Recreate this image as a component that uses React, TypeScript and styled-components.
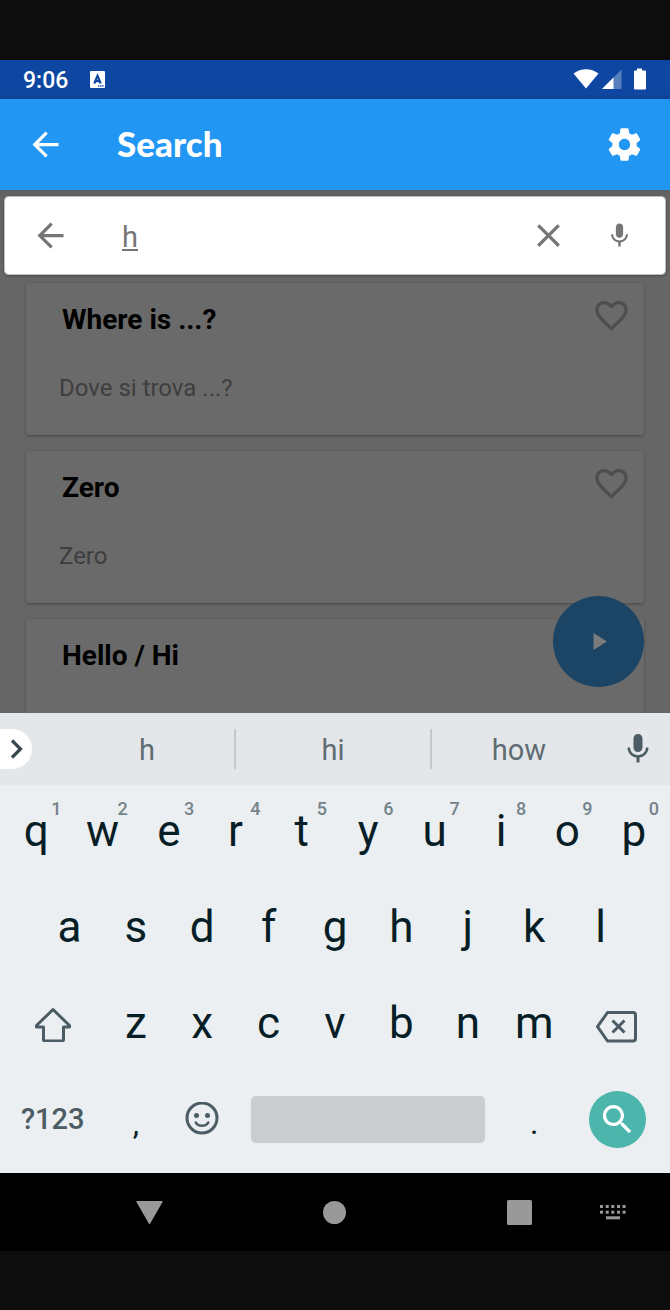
import React, { useState } from "react";
import styled, { createGlobalStyle } from "styled-components";

const GlobalStyle = createGlobalStyle`
  *, *::before, *::after { box-sizing: border-box; }
  html, body { margin: 0; padding: 0; background: #0d0d0d; }
  body { font-family: Roboto, "Liberation Sans", sans-serif; }
  button, input { font: inherit; color: inherit; }
`;

const Device = styled.div`
  display: flex;
  flex-direction: column;
  height: 100vh;
  min-height: 900px;
  padding: 60px 0 59px;
  background: #0d0d0d;
`;

const StatusBar = styled.div`
  flex: none;
  display: flex;
  align-items: center;
  height: 39px;
  padding: 0 24px 0 23px;
  background: linear-gradient(#0d47a1 34px, #0c3f8f 39px);
  color: #fff;
`;

const Clock = styled.span`
  flex: none;
  width: 67px;
  padding-top: 2px;
  font-size: 23px;
  font-weight: 500;
  line-height: 40px;
`;

const StatusIcons = styled.div`
  display: flex;
  align-items: center;
  margin-left: auto;
`;

const AppBar = styled.header`
  flex: none;
  display: flex;
  align-items: center;
  gap: 52px;
  height: 91px;
  padding: 0 26px;
  background: #2196f3;
  color: #fff;
`;

const Heading = styled.h1`
  flex: 1;
  margin: 0;
  padding-bottom: 3px;
  font-family: Lato, "Liberation Sans", sans-serif;
  font-size: 35px;
  font-weight: 900;
  line-height: 40px;
`;

const IconButton = styled.button`
  flex: none;
  display: flex;
  align-items: center;
  justify-content: center;
  width: 39px;
  height: 39px;
  padding: 0;
  border: 0;
  background: none;
`;

const Content = styled.main`
  position: relative;
  flex: 1;
  min-height: 0;
  overflow: hidden;
  padding-top: 6px;
  background: linear-gradient(#5e5e5e, #666 8px);
`;

const SearchBar = styled.form`
  display: flex;
  align-items: center;
  height: 79px;
  margin: 0 4px 8px;
  padding: 0 26px;
  border: 1px solid #bdbdbd;
  border-radius: 4px;
  background: #fff;
  background-clip: padding-box;
  box-shadow: 0 1px 3px rgba(0, 0, 0, 0.3);
  color: #757575;
`;

const SearchField = styled.input`
  flex: 1;
  min-width: 0;
  margin: 0 32px 0 52px;
  padding: 2px 0 0;
  border: 0;
  outline: 0;
  background: none;
  color: #757575;
  font-size: 29px;
  line-height: 40px;
  text-decoration: underline;
  text-decoration-thickness: 2px;
  text-underline-offset: 2px;
`;

const MicButton = styled(IconButton)`
  margin-left: 32px;
`;

const PhraseList = styled.ul`
  display: flex;
  flex-direction: column;
  gap: 16px;
  margin: 0;
  padding: 0 26px;
  list-style: none;
`;

const PhraseCard = styled.li`
  display: flex;
  flex: none;
  justify-content: space-between;
  align-items: flex-start;
  height: 152px;
  padding: 13px 13px 0 33px;
  border-radius: 3px;
  background: #6a6a6a;
  box-shadow: 0 1px 3px rgba(0, 0, 0, 0.3);
`;

const PhraseTitle = styled.h2`
  margin: 8px 0 37px 3px;
  color: #000;
  font-size: 28px;
  font-weight: 700;
  line-height: 32px;
`;

const PhraseText = styled.p`
  margin: 0;
  color: #3e3e3e;
  font-size: 24px;
  line-height: 30px;
`;

const HeartButton = styled(IconButton)`
  color: #4f4d4d;
`;

const PlayButton = styled.button`
  position: absolute;
  right: 26px;
  bottom: 26px;
  display: flex;
  align-items: center;
  justify-content: center;
  width: 91px;
  height: 91px;
  padding: 0;
  border: 0;
  border-radius: 50%;
  background: #1c4464;
  color: #7b7b7b;
`;

const Keyboard = styled.section`
  flex: none;
  background: #ebeff2;
`;

const Suggestions = styled.div`
  display: grid;
  grid-template-columns: 60px 174fr 198fr 174fr 64px;
  align-items: center;
  height: 72px;
  background: #e3e7ea;
  color: #4b5c64;
`;

const ExpandButton = styled.button`
  display: flex;
  align-items: center;
  justify-content: flex-end;
  width: 32px;
  height: 40px;
  padding: 0 8px 0 0;
  border: 0;
  border-radius: 0 20px 20px 0;
  background: #fff;
  color: #37474f;
`;

const Suggestion = styled.button<{ $divided?: boolean }>`
  height: 40px;
  padding: 2px 0 0;
  border: 0 solid #c3c8cb;
  border-width: 0 ${(p) => (p.$divided ? "2px" : "0")};
  background: none;
  color: #5f6c72;
  font-size: 29px;
  line-height: 38px;
`;

const VoiceButton = styled(IconButton)`
  justify-self: center;
`;

const Keys = styled.div`
  padding: 0 3px 4px;
`;

/* Twenty half-key columns, so that keys may be 1, 1.5 or 4 keys wide. */
const KeyRow = styled.div`
  display: grid;
  grid-template-columns: repeat(20, minmax(0, 1fr));
  height: 96px;
`;

const Key = styled.button<{ $span?: number; $start?: number }>`
  position: relative;
  display: flex;
  align-items: center;
  justify-content: center;
  grid-column: ${(p) => (p.$start ? p.$start : "auto")} / span ${(p) => p.$span ?? 2};
  padding: 0 0 4px;
  border: 0;
  background: none;
  color: #071e26;
  font-size: 44px;
  line-height: 52px;
`;

const PunctuationKey = styled(Key)`
  padding: 4px 0 0;
  font-size: 32px;
`;

const FunctionKey = styled(Key)`
  color: #4b5c64;
  font-size: 29px;
  font-weight: 500;
`;

const Hint = styled.span`
  position: absolute;
  top: 13px;
  right: 8px;
  color: #75838a;
  font-size: 18px;
  font-weight: 500;
  line-height: 22px;
`;

const SpaceBar = styled.span`
  flex: 1;
  height: 47px;
  margin: 0 16px;
  border-radius: 5px;
  background: #c9cdd0;
`;

const SearchDisc = styled.span`
  display: flex;
  align-items: center;
  justify-content: center;
  width: 57px;
  height: 57px;
  border-radius: 50%;
  background: #4db6ac;
  color: #fff;
`;

const NavBar = styled.nav`
  flex: none;
  display: grid;
  grid-template-columns: 189fr 185fr 185fr 93fr;
  justify-items: end;
  padding-right: 18px;
  background: #000;
  color: #999;
`;

const NavButton = styled(IconButton)`
  width: 79px;
  height: 78px;
`;

function Icon({ d, size = 39 }: { d: string; size?: number }) {
  return (
    <svg width={size} height={size} viewBox="0 0 24 24" fill="currentColor" aria-hidden="true">
      <path d={d} />
    </svg>
  );
}

const paths = {
  back: "M20 11H7.83l5.59-5.59L12 4l-8 8 8 8 1.41-1.41L7.83 13H20v-2z",
  close: "M19 6.41L17.59 5 12 10.59 6.41 5 5 6.41 10.59 12 5 17.59 6.41 19 12 13.41 17.59 19 19 17.59 13.41 12z",
  mic: "M12 14c1.66 0 2.99-1.34 2.99-3L15 5c0-1.66-1.34-3-3-3S9 3.34 9 5v6c0 1.66 1.34 3 3 3zm5.3-3c0 3-2.54 5.1-5.3 5.1S6.7 14 6.7 11H5c0 3.41 2.72 6.23 6 6.72V21h2v-3.28c3.28-.48 6-3.3 6-6.72h-1.7z",
  heart:
    "M16.5 3c-1.74 0-3.41.81-4.5 2.09C10.91 3.81 9.24 3 7.5 3 4.42 3 2 5.42 2 8.5c0 3.78 3.4 6.86 8.55 11.54L12 21.35l1.45-1.32C18.6 15.36 22 12.28 22 8.5 22 5.42 19.58 3 16.5 3zm-4.4 15.55l-.1.1-.1-.1C7.14 14.24 4 11.39 4 8.5 4 6.5 5.5 5 7.5 5c1.54 0 3.04.99 3.57 2.36h1.87C13.46 5.99 14.96 5 16.5 5c2 0 3.5 1.5 3.5 3.5 0 2.89-3.14 5.74-7.9 10.05z",
  settings:
    "M19.43 12.98c.04-.32.07-.64.07-.98s-.03-.66-.07-.98l2.11-1.65c.19-.15.24-.42.12-.64l-2-3.46c-.12-.22-.39-.3-.61-.22l-2.49 1c-.52-.4-1.08-.73-1.69-.98l-.38-2.65C14.46 2.18 14.25 2 14 2h-4c-.25 0-.46.18-.49.42l-.38 2.65c-.61.25-1.17.59-1.69.98l-2.49-1c-.23-.09-.49 0-.61.22l-2 3.46c-.13.22-.07.49.12.64l2.11 1.65c-.04.32-.07.65-.07.98s.03.66.07.98l-2.11 1.65c-.19.15-.24.42-.12.64l2 3.46c.12.22.39.3.61.22l2.49-1c.52.4 1.08.73 1.69.98l.38 2.65c.03.24.24.42.49.42h4c.25 0 .46-.18.49-.42l.38-2.65c.61-.25 1.17-.59 1.69-.98l2.49 1c.23.09.49 0 .61-.22l2-3.46c.12-.22.07-.49-.12-.64l-2.11-1.65zM12 15.5c-1.93 0-3.5-1.57-3.5-3.5s1.57-3.5 3.5-3.5 3.5 1.57 3.5 3.5-1.57 3.5-3.5 3.5z",
  search:
    "M15.5 14h-.79l-.28-.27C15.41 12.59 16 11.11 16 9.5 16 5.91 13.09 3 9.5 3S3 5.91 3 9.5 5.91 16 9.5 16c1.61 0 3.09-.59 4.23-1.57l.27.28v.79l5 4.99L20.49 19l-4.99-5zm-6 0C7.01 14 5 11.99 5 9.5S7.01 5 9.5 5 14 7.01 14 9.5 11.99 14 9.5 14z",
};

const phrases: { title: string; text?: string }[] = [
  { title: "Where is ...?", text: "Dove si trova ...?" },
  { title: "Zero", text: "Zero" },
  { title: "Hello / Hi" },
];

const topRow = "qwertyuiop".split("");
const homeRow = "asdfghjkl".split("");
const bottomRow = "zxcvbnm".split("");

function StatusIndicators() {
  return (
    <StatusIcons>
      <svg width="73" height="24" viewBox="0 0 73 24" fill="#fff" aria-label="Wi-Fi, signal, battery">
        <path d="M0.500 5.600C8 -0.100 18 -0.100 25.500 5.600L13 20.500z" />
        <path d="M29 21L48.500 1.500V21z" opacity=".3" />
        <path d="M29 21L40.500 9.500V21z" />
        <path d="M64 0.500h5v2h3q1 0 1 1v17q0 1-1 1H62q-1 0-1-1v-17q0-1 1-1h2z" />
      </svg>
    </StatusIcons>
  );
}

export default function App() {
  const [query, setQuery] = useState("h");
  const type = (letter: string) => setQuery((q) => q + letter);

  return (
    <>
      <GlobalStyle />
      <Device>
        <StatusBar>
          <Clock>9:06</Clock>
          <svg width="15" height="17" viewBox="0 0 15 17" aria-hidden="true">
            <rect width="15" height="17" rx="1" fill="#fff" />
            <path d="M4.300 12.500L7.500 4.800L10.700 12.500M5.300 10.200H9.700" fill="none" stroke="#0d47a1" strokeWidth="2.200" />
            <path d="M8 15h6" stroke="#0d47a1" strokeWidth="1.400" strokeDasharray="1.300 .8" />
          </svg>
          <StatusIndicators />
        </StatusBar>

        <AppBar>
          <IconButton type="button" aria-label="Back">
            <Icon d={paths.back} />
          </IconButton>
          <Heading>Search</Heading>
          <IconButton type="button" aria-label="Settings">
            <Icon d={paths.settings} />
          </IconButton>
        </AppBar>

        <Content>
          <SearchBar onSubmit={(e) => e.preventDefault()}>
            <IconButton type="button" aria-label="Close search">
              <Icon d={paths.back} />
            </IconButton>
            <SearchField aria-label="Search phrases" value={query} onChange={(e) => setQuery(e.target.value)} />
            <IconButton type="button" aria-label="Clear" onClick={() => setQuery("")}>
              <Icon d={paths.close} />
            </IconButton>
            <MicButton type="button" aria-label="Voice search">
              <Icon d={paths.mic} size={29} />
            </MicButton>
          </SearchBar>

          <PhraseList>
            {phrases.map((p) => (
              <PhraseCard key={p.title}>
                <div>
                  <PhraseTitle>{p.title}</PhraseTitle>
                  {p.text && <PhraseText>{p.text}</PhraseText>}
                </div>
                <HeartButton type="button" aria-label={`Favourite ${p.title}`}>
                  <Icon d={paths.heart} />
                </HeartButton>
              </PhraseCard>
            ))}
          </PhraseList>

          <PlayButton type="button" aria-label="Play">
            <svg width="14" height="17" viewBox="0 0 14 17" fill="currentColor" overflow="visible" aria-hidden="true">
              <path d="M1.500 0L15 8.500L1.500 17z" />
            </svg>
          </PlayButton>
        </Content>

        <Keyboard aria-label="Keyboard">
          <Suggestions>
            <ExpandButton type="button" aria-label="More">
              <svg width="14" height="20" viewBox="0 0 14 20" fill="none" stroke="currentColor" strokeWidth="3.200" aria-hidden="true">
                <path d="M2 1.500L10.500 10L2 18.500" />
              </svg>
            </ExpandButton>
            <Suggestion type="button">h</Suggestion>
            <Suggestion type="button" $divided>hi</Suggestion>
            <Suggestion type="button">how</Suggestion>
            <VoiceButton type="button" aria-label="Voice typing">
              <Icon d={paths.mic} size={36} />
            </VoiceButton>
          </Suggestions>

          <Keys>
            <KeyRow>
              {topRow.map((k, i) => (
                <Key key={k} type="button" onClick={() => type(k)}>
                  {k}
                  <Hint>{(i + 1) % 10}</Hint>
                </Key>
              ))}
            </KeyRow>
            <KeyRow>
              {homeRow.map((k, i) => (
                <Key key={k} type="button" $start={i === 0 ? 2 : undefined} onClick={() => type(k)}>
                  {k}
                </Key>
              ))}
            </KeyRow>
            <KeyRow>
              <FunctionKey type="button" $span={3} aria-label="Shift">
                <svg width="38" height="38" viewBox="0 0 38 38" fill="none" stroke="currentColor" strokeWidth="3" strokeLinejoin="round" aria-hidden="true">
                  <path d="M19 5.500L35.500 21.500V23H29.500V35.500q0 1.500-1.500 1.500h-17Q9.500 37 9.500 35.500V23H2.500V21.500z" />
                </svg>
              </FunctionKey>
              {bottomRow.map((k) => (
                <Key key={k} type="button" onClick={() => type(k)}>
                  {k}
                </Key>
              ))}
              <FunctionKey type="button" $span={3} aria-label="Backspace" onClick={() => setQuery((q) => q.slice(0, -1))}>
                <svg width="42" height="40" viewBox="1 0 42 40" fill="none" stroke="currentColor" strokeWidth="3" strokeLinejoin="round" aria-hidden="true">
                  <path d="M12.500 9.500H38Q40.500 9.500 40.500 12V35.500Q40.500 38 38 38H12.500L2.500 23.700z" />
                  <path d="M17.500 17.500L29.500 29.500M29.500 17.500L17.500 29.500" />
                </svg>
              </FunctionKey>
            </KeyRow>
            <KeyRow>
              <FunctionKey type="button" $span={3}>?123</FunctionKey>
              <PunctuationKey type="button" onClick={() => type(",")}>,</PunctuationKey>
              <FunctionKey type="button" aria-label="Emoji">
                <svg width="34" height="34" viewBox="0 0 34 34" fill="none" stroke="currentColor" strokeWidth="3" aria-hidden="true">
                  <circle cx="17" cy="16" r="15" />
                  <path d="M10.800 20.500C13 24.800 21 24.800 23.200 20.500" strokeWidth="2.600" strokeLinecap="round" />
                  <circle cx="11.500" cy="13.500" r="2.500" fill="currentColor" stroke="none" />
                  <circle cx="22.500" cy="13.500" r="2.500" fill="currentColor" stroke="none" />
                </svg>
              </FunctionKey>
              <Key type="button" $span={8} aria-label="Space" onClick={() => type(" ")}>
                <SpaceBar />
              </Key>
              <PunctuationKey type="button" onClick={() => type(".")}>.</PunctuationKey>
              <Key type="button" $span={3} aria-label="Search">
                <SearchDisc>
                  <Icon d={paths.search} />
                </SearchDisc>
              </Key>
            </KeyRow>
          </Keys>
        </Keyboard>

        <NavBar aria-label="System">
          <NavButton type="button" aria-label="Back">
            <svg width="27" height="24" viewBox="0 0 27 24" fill="currentColor" aria-hidden="true">
              <path d="M1.200 1H25.800Q27 1 26.400 2.200L14.200 23.400Q13.500 24.400 12.800 23.400L.6 2.200Q0 1 1.200 1z" />
            </svg>
          </NavButton>
          <NavButton type="button" aria-label="Home">
            <svg width="23" height="23" viewBox="0 0 23 23" fill="currentColor" aria-hidden="true">
              <circle cx="11.500" cy="11.500" r="11.500" />
            </svg>
          </NavButton>
          <NavButton type="button" aria-label="Recent apps">
            <svg width="25" height="25" viewBox="0 0 25 25" fill="currentColor" aria-hidden="true">
              <rect width="25" height="25" rx="1.500" />
            </svg>
          </NavButton>
          <NavButton type="button" aria-label="Switch keyboard">
            <svg width="26" height="15" viewBox="0 0 26 15" fill="currentColor" aria-hidden="true">
              {[0, 5.7, 11.3, 17, 22.6].map((x) => (
                <g key={x}>
                  <rect x={x} y="0" width="3" height="3" />
                  <rect x={x} y="5.700" width="3" height="3" />
                </g>
              ))}
              <rect x="6" y="11.300" width="14" height="3" />
            </svg>
          </NavButton>
        </NavBar>
      </Device>
    </>
  );
}
